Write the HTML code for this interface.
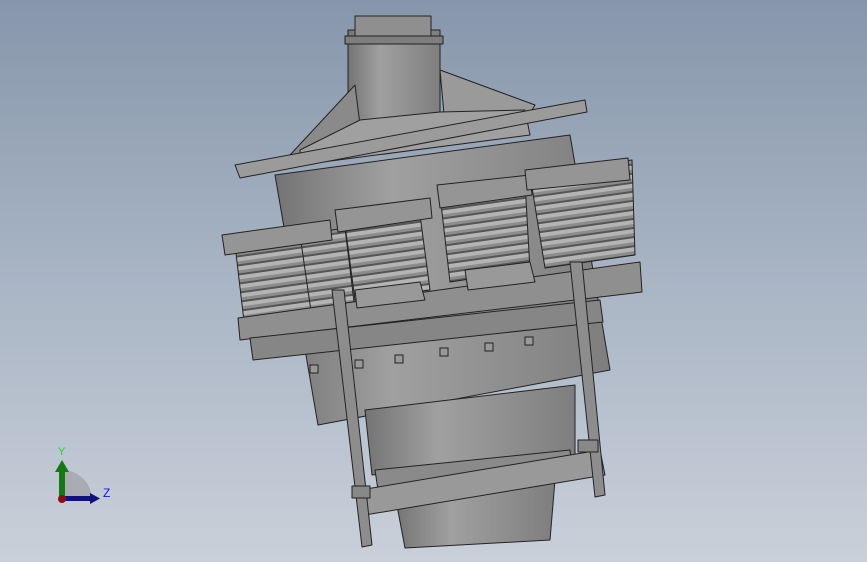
<!DOCTYPE html>
<html><head><style>
html,body{margin:0;padding:0;width:867px;height:562px;overflow:hidden}
body{background:linear-gradient(#8796ab 0%,#a9b5c4 50%,#c9d0da 100%);font-family:"Liberation Sans",sans-serif}
</style></head><body>
<svg width="867" height="562" viewBox="0 0 867 562" xmlns="http://www.w3.org/2000/svg">
<defs>
<linearGradient id="cyl" x1="0" x2="1" y1="0" y2="0">
<stop offset="0" stop-color="#747474"/><stop offset="0.35" stop-color="#a0a0a0"/><stop offset="1" stop-color="#7e7e7e"/></linearGradient>
<pattern id="spr" width="20" height="9" patternUnits="userSpaceOnUse" patternTransform="rotate(-8)">
<rect width="20" height="9" fill="#8c8c8c"/><rect y="0" width="20" height="4" fill="#b4b4b4"/><rect y="7" width="20" height="2" fill="#555"/></pattern>
</defs>
<g stroke="#222" stroke-width="1" stroke-linejoin="round">
<rect x="348" y="30" width="92" height="95" fill="url(#cyl)"/>
<rect x="355" y="16" width="76" height="22" fill="#8f8f8f"/>
<rect x="345" y="36" width="98" height="8" fill="#7e7e7e"/>
<polygon points="290,155 355,85 360,125 330,150" fill="#8a8a8a"/>
<polygon points="440,70 535,105 520,130 445,125" fill="#9a9a9a"/>
<polygon points="300,150 360,120 440,112 525,110 530,135 300,165" fill="#a0a0a0"/>
<polygon points="235,165 585,100 587,112 240,178" fill="#9b9b9b"/>
<polygon points="275,175 570,135 610,370 318,425" fill="url(#cyl)"/>
<polygon points="365,410 575,385 575,455 372,475" fill="url(#cyl)"/>
<polygon points="375,470 570,450 572,470 378,490" fill="#8a8a8a"/>
<polygon points="395,495 555,480 550,540 405,548" fill="url(#cyl)"/>
<polygon points="360,490 600,450 605,475 365,515" fill="#999"/>
<polygon points="235,245 300,232 315,320 245,330" fill="url(#spr)"/>
<polygon points="300,235 345,228 355,310 312,318" fill="url(#spr)"/>
<polygon points="345,225 420,215 430,290 355,300" fill="url(#spr)"/>
<polygon points="440,195 525,182 530,270 450,282" fill="url(#spr)"/>
<polygon points="530,175 632,160 635,255 545,268" fill="url(#spr)"/>
<polygon points="222,235 330,220 332,240 225,255" fill="#959595"/>
<polygon points="335,210 430,198 432,218 338,232" fill="#959595"/>
<polygon points="437,185 530,175 532,195 440,208" fill="#959595"/>
<polygon points="525,170 628,158 630,180 527,190" fill="#959595"/>
<polygon points="238,318 640,262 642,292 240,340" fill="#8f8f8f"/>
<polygon points="250,338 600,300 603,322 253,360" fill="#868686"/>
<polygon points="355,290 420,282 425,300 357,308" fill="#999"/>
<polygon points="465,270 530,262 535,282 468,290" fill="#999"/>
<polygon points="332,290 344,290 372,545 362,547" fill="#8d8d8d"/>
<polygon points="570,262 582,262 605,495 595,497" fill="#8d8d8d"/>
<rect x="352" y="486" width="18" height="12" fill="#888"/>
<rect x="578" y="440" width="20" height="12" fill="#888"/>
</g>
<g stroke="#222" stroke-width="1" fill="#999">
<rect x="310" y="365" width="8" height="8"/><rect x="355" y="360" width="8" height="8"/><rect x="395" y="355" width="8" height="8"/>
<rect x="440" y="348" width="8" height="8"/><rect x="485" y="343" width="8" height="8"/><rect x="525" y="337" width="8" height="8"/>
</g>
<path d="M62 500 L62 470 A30 30 0 0 1 92 500 Z" fill="#a9acb2"/>
<rect x="59" y="470" width="6" height="30" fill="#137a13"/>
<polygon points="55,472 62,460 69,472" fill="#137a13"/>
<rect x="62" y="496" width="30" height="5" fill="#10147a"/>
<polygon points="90,493 100,498.5 90,504" fill="#10147a"/>
<circle cx="62" cy="499" r="4" fill="#8a1010"/>
<text x="58" y="455" fill="#1bd81b" font-size="11">Y</text>
<text x="103" y="497" fill="#1515e0" font-size="12">Z</text>
</svg>
</body></html>
